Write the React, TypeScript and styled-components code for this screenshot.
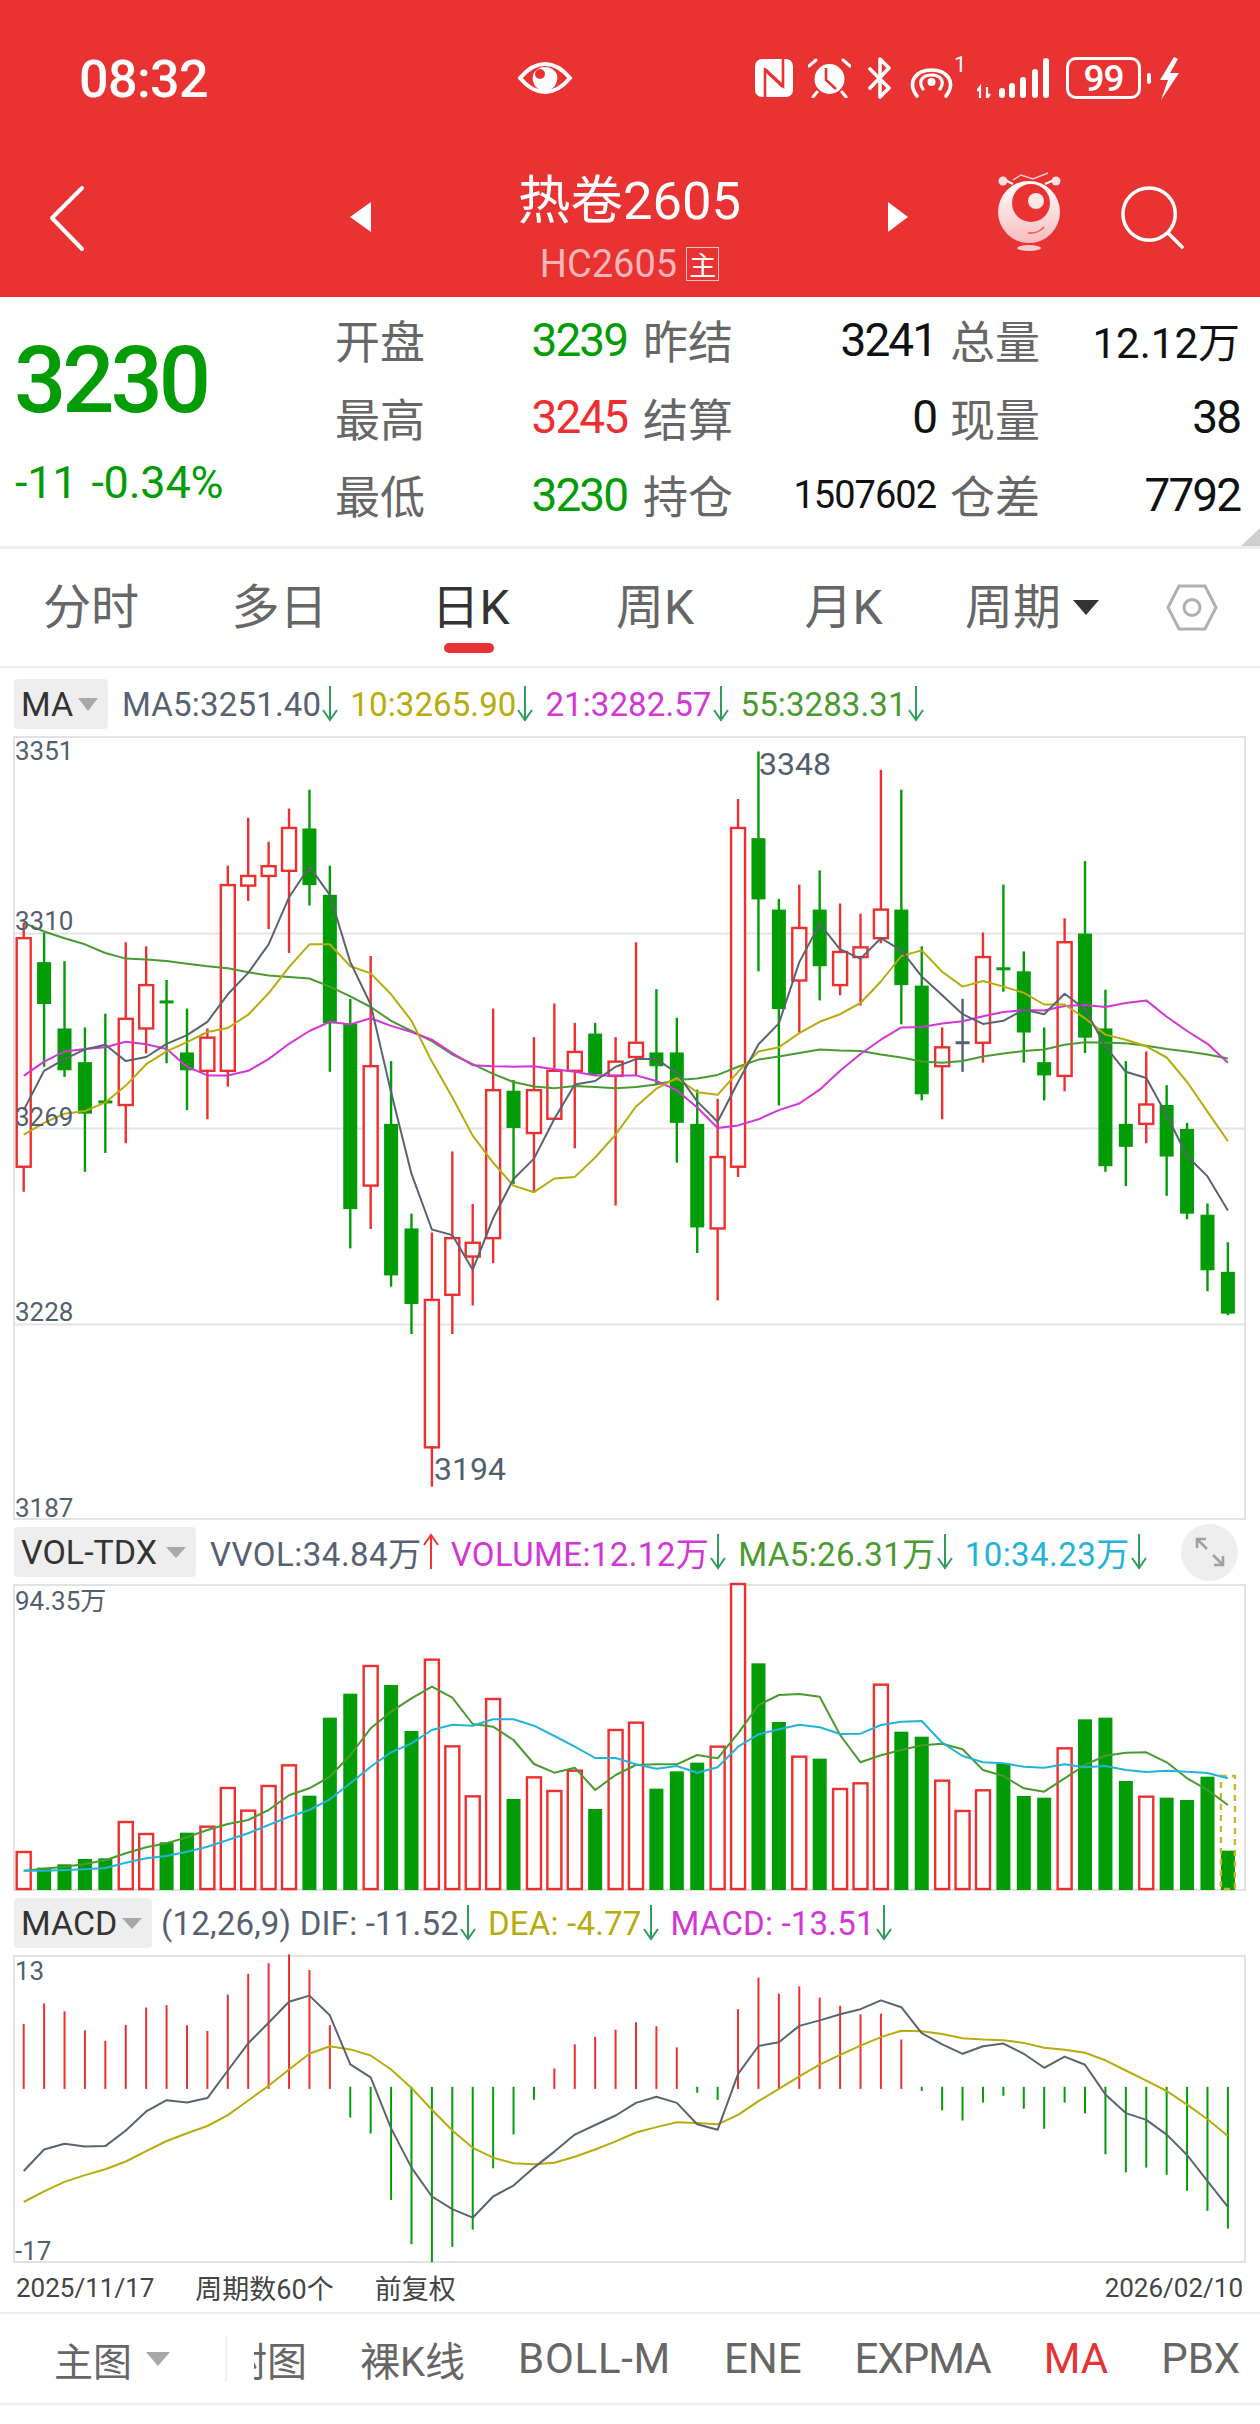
import styled, { createGlobalStyle } from 'styled-components';

const FONT = `Roboto, "Noto Sans CJK SC", sans-serif`;
const RED = '#ee2f2f';
const GREEN = '#029c06';
const LINE_GRAY = '#5a6470';
const LINE_YELLOW = '#b7ab0d';
const LINE_MAGENTA = '#d336d6';
const LINE_GREEN = '#4a9a2f';
const LINE_CYAN = '#22b4d8';

// candle x on the page
const cx = (i: number) => 23.7 + 20.41 * i;

// measured chart data, in crop units, converted below
type Candle = [number, number, number, number, 'r' | 'g' | 'n'];
const candles: Candle[] = [
  [378, 408, 856, 905, 'r'], [397, 455, 537, 660, 'g'], [453, 585, 667, 680, 'g'], [583, 651, 752, 866, 'g'],
  [556, 729, 729, 829, 'g'], [416, 566, 735, 810, 'r'], [424, 500, 585, 634, 'r'], [490, 533, 533, 653, 'g'],
  [546, 632, 667, 745, 'g'], [585, 603, 668, 763, 'r'], [266, 304, 668, 699, 'r'], [172, 286, 305, 335, 'r'],
  [219, 267, 286, 390, 'r'], [154, 192, 276, 437, 'r'], [117, 193, 304, 344, 'g'], [266, 323, 575, 670, 'g'],
  [527, 575, 939, 1016, 'g'], [443, 659, 893, 978, 'r'], [649, 772, 1069, 1091, 'g'], [948, 977, 1125, 1184, 'g'],
  [985, 1117, 1406, 1483, 'r'], [826, 996, 1107, 1184, 'r'], [929, 1005, 1032, 1128, 'r'], [546, 706, 996, 1045, 'r'],
  [686, 707, 780, 890, 'g'], [602, 706, 790, 905, 'r'], [536, 668, 762, 762, 'r'], [574, 631, 668, 820, 'r'],
  [574, 595, 675, 678, 'g'], [602, 650, 678, 932, 'r'], [416, 613, 641, 678, 'r'], [508, 632, 659, 695, 'g'],
  [564, 632, 770, 848, 'g'], [705, 772, 975, 1025, 'g'], [723, 837, 977, 1118, 'r'], [135, 192, 856, 876, 'r'],
  [42, 212, 332, 473, 'g'], [331, 352, 547, 736, 'g'], [303, 388, 491, 593, 'r'], [275, 352, 463, 530, 'g'],
  [340, 435, 500, 520, 'r'], [360, 426, 445, 540, 'r'], [78, 352, 408, 418, 'r'], [117, 352, 500, 577, 'g'],
  [424, 501, 714, 726, 'g'], [583, 622, 659, 763, 'r'], [527, 613, 613, 670, 'n'], [397, 445, 613, 652, 'r'],
  [303, 468, 468, 513, 'g'], [434, 473, 593, 652, 'g'], [583, 651, 677, 726, 'g'], [369, 416, 678, 708, 'r'],
  [257, 399, 603, 633, 'g'], [509, 585, 855, 866, 'g'], [649, 772, 817, 894, 'g'], [630, 734, 772, 810, 'r'],
  [696, 735, 836, 913, 'g'], [770, 782, 948, 959, 'g'], [928, 950, 1059, 1100, 'g'], [1004, 1062, 1144, 1147, 'g'],
];

const ma5 = [745, 668, 645, 626, 617, 649, 641, 615, 598, 572, 518, 476, 420, 328, 268, 323, 455, 538, 710, 870, 979, 990, 1058, 957, 880, 840, 762, 695, 688, 660, 645, 645, 672, 728, 768, 690, 616, 575, 455, 380, 430, 448, 408, 432, 483, 520, 557, 576, 570, 548, 557, 517, 547, 620, 670, 682, 755, 835, 875, 942];
const ma10 = [793, 770, 752, 747, 730, 697, 655, 630, 612, 592, 584, 558, 516, 465, 420, 420, 463, 477, 518, 570, 650, 720, 795, 848, 893, 906, 879, 876, 838, 793, 738, 703, 682, 710, 715, 670, 630, 622, 594, 572, 557, 535, 493, 443, 432, 474, 503, 492, 503, 515, 538, 538, 565, 597, 607, 620, 642, 690, 748, 806];
const ma21 = [678, 650, 630, 625, 622, 611, 616, 625, 660, 677, 677, 668, 645, 615, 590, 572, 577, 565, 580, 592, 607, 633, 657, 659, 660, 659, 665, 670, 677, 677, 677, 688, 706, 740, 780, 775, 763, 745, 732, 705, 668, 635, 607, 583, 582, 575, 571, 561, 553, 549, 550, 541, 539, 543, 535, 530, 562, 590, 615, 652];
const ma55 = [378, 395, 408, 420, 437, 448, 450, 453, 458, 463, 467, 475, 481, 484, 487, 503, 522, 543, 570, 590, 610, 636, 655, 674, 690, 699, 702, 698, 700, 702, 700, 695, 686, 683, 676, 660, 646, 640, 633, 626, 628, 629, 636, 642, 650, 652, 649, 640, 634, 629, 626, 617, 612, 613, 614, 619, 625, 630, 636, 644];

const volTops = [996, 1043, 1033, 1017, 1015, 906, 942, 967, 938, 920, 804, 872, 798, 736, 827, 593, 521, 438, 495, 633, 419, 679, 829, 537, 837, 772, 813, 752, 867, 630, 608, 806, 754, 728, 680, 192, 430, 606, 710, 716, 807, 790, 494, 635, 650, 782, 873, 811, 730, 828, 833, 685, 598, 593, 783, 830, 833, 840, 770, 992];
const volRed = new Set([0, 5, 6, 9, 10, 11, 12, 13, 17, 20, 21, 22, 23, 25, 26, 27, 29, 30, 34, 35, 38, 40, 41, 42, 45, 46, 47, 51, 55]);
const volMa5 = [1052, 1046, 1040, 1032, 1021, 1000, 982, 970, 952, 930, 912, 900, 870, 826, 805, 770, 705, 625, 575, 535, 500, 533, 612, 620, 660, 732, 758, 743, 810, 765, 735, 733, 733, 705, 715, 640, 555, 525, 522, 530, 645, 727, 706, 690, 676, 671, 688, 750, 768, 805, 815, 775, 735, 707, 698, 697, 727, 775, 810, 855];
const volMa10 = [1052, 1052, 1050, 1048, 1044, 1028, 1015, 1008, 995, 980, 960, 940, 915, 890, 870, 838, 790, 740, 697, 670, 630, 614, 617, 598, 598, 617, 648, 680, 714, 714, 733, 746, 738, 758, 742, 680, 643, 628, 614, 622, 642, 641, 615, 605, 603, 668, 708, 727, 730, 740, 743, 733, 742, 738, 750, 756, 752, 755, 759, 775];

const macdEnds = [393, 333, 356, 412, 443, 396, 345, 338, 397, 414, 307, 246, 215, 189, 235, 397, 668, 715, 910, 1040, 1093, 1048, 997, 817, 718, 616, 524, 453, 431, 410, 388, 400, 462, 595, 616, 350, 257, 304, 283, 316, 340, 365, 363, 439, 590, 647, 677, 624, 604, 642, 701, 624, 656, 776, 829, 815, 836, 883, 942, 994];
const dif = [825, 762, 745, 753, 752, 706, 650, 617, 624, 611, 530, 450, 390, 328, 310, 368, 512, 550, 700, 815, 900, 937, 962, 900, 868, 815, 768, 718, 690, 662, 625, 607, 625, 688, 704, 540, 458, 447, 399, 383, 365, 350, 324, 344, 420, 453, 481, 459, 451, 481, 522, 489, 513, 600, 655, 675, 718, 778, 855, 930];
const dea = [916, 885, 857, 837, 820, 797, 767, 737, 714, 693, 661, 618, 575, 527, 481, 459, 468, 486, 527, 581, 645, 706, 757, 786, 802, 805, 801, 783, 762, 738, 712, 696, 682, 684, 688, 660, 620, 584, 547, 513, 484, 457, 432, 413, 415, 423, 435, 439, 441, 449, 463, 469, 478, 500, 530, 560, 590, 630, 673, 722];

const mainY = (v: number) => 730 + v * 0.5102;
const volY = (v: number) => 1520 + v / 3;
const macdY = (v: number) => 1890 + v * 0.3406;

const GlobalStyle = createGlobalStyle`
  html, body {
    margin: 0;
    padding: 0;
    background: #fff;
  }
  * {
    box-sizing: border-box;
  }
`;

const Page = styled.div`
  width: 1260px;
  height: 2424px;
  overflow: hidden;
  background: #fff;
  font-family: ${FONT};
  color: #333;
`;

const Header = styled.header`
  height: 297px;
  background: #e93333;
  color: #fff;
`;

const StatusBar = styled.div`
  display: flex;
  align-items: center;
  height: 170px;
  padding: 0 0 14px 79px;
`;

const Clock = styled.span`
  width: 439px;
  padding-top: 3px;
  font-size: 52px;
  font-weight: 500;
  letter-spacing: -0.6px;
`;

const StatusIcons = styled.div`
  display: flex;
  align-items: center;
  margin-left: 183px;
`;

const Sup = styled.span`
  align-self: flex-start;
  width: 23px;
  margin-top: -3px;
  font-size: 22px;
  line-height: 22px;
`;

const Battery = styled.div`
  display: flex;
  align-items: center;
  justify-content: center;
  width: 75px;
  height: 42px;
  margin-left: 17px;
  border: 3px solid #fff;
  border-radius: 10px;
  font-size: 37px;
  font-weight: 500;
  letter-spacing: -1px;
`;

const BatteryNub = styled.div`
  width: 4px;
  height: 11px;
  margin: 0 8px 0 6px;
  background: #fff;
  border-radius: 2px;
`;

const NavBar = styled.nav`
  display: grid;
  grid-template-columns: 350px 21px 517px 20px 88px 63px 62px 64px 75px;
  height: 127px;
`;

const Arrow = styled.div<{ $dir: 'left' | 'right' }>`
  align-self: start;
  margin-top: 32px;
  width: 0;
  height: 0;
  border-top: 15px solid transparent;
  border-bottom: 15px solid transparent;
  ${(p) => (p.$dir === 'left' ? 'border-right: 21px solid #fff;' : 'border-left: 20px solid #fff;')}
`;

const TitleBlock = styled.div`
  display: flex;
  flex-direction: column;
  align-items: center;
`;

const Title = styled.div`
  padding-top: 3px;
  font-size: 52.5px;
  line-height: 56px;
`;

const SubTitle = styled.div`
  display: flex;
  align-items: center;
  gap: 9px;
  margin-top: 17px;
  height: 36px;
  font-size: 38px;
  color: #f7b7b7;
`;

const MainBadge = styled.span`
  display: flex;
  align-items: center;
  justify-content: center;
  width: 33px;
  height: 34px;
  border: 1px solid #f7c4c4;
  font-size: 27px;
  color: #fff;
`;

const QuotePanel = styled.section`
  position: relative;
  display: flex;
  height: 252px;
  border-bottom: 3px solid #eeeeee;
`;

const CornerMark = styled.div`
  position: absolute;
  right: 0;
  bottom: 0;
  width: 0;
  height: 0;
  border-left: 19px solid transparent;
  border-bottom: 18px solid #cfcfcf;
`;

const PriceBlock = styled.div`
  width: 335px;
  padding: 38px 0 0 14px;
  color: ${GREEN};
`;

const BigPrice = styled.div`
  font-size: 92px;
  font-weight: 500;
  line-height: 92px;
  letter-spacing: -4px;
`;

const PriceChange = styled.div`
  margin-top: 35px;
  padding-left: 1px;
  font-size: 45px;
  line-height: 42px;
  letter-spacing: -0.2px;
  word-spacing: 3px;
`;

const QuoteGrid = styled.div`
  display: grid;
  grid-template-columns: 90px 202px 106px 203px 104px 200px;
  grid-auto-rows: 77.5px;
  padding-top: 4px;
  align-items: center;
`;

const QuoteLabel = styled.span`
  font-size: 45px;
  color: #666;
  text-align: right;
  white-space: nowrap;
`;

const QuoteValue = styled.span<{ $color?: string; $size?: number }>`
  font-size: ${(p) => p.$size ?? 46}px;
  letter-spacing: ${(p) => (p.$size === 42 ? 0 : p.$size ? -1 : -2)}px;
  color: ${(p) => p.$color ?? '#111'};
  text-align: right;
  white-space: nowrap;
`;

const TabRow = styled.div`
  display: grid;
  grid-template-columns: 182px 195px 187px 182px 195px 204px 1fr;
  height: 119px;
  align-items: center;
  border-bottom: 2px solid #eeeeee;
`;

const Tab = styled.div<{ $active?: boolean }>`
  position: relative;
  text-align: center;
  font-size: 48px;
  line-height: 60px;
  color: ${(p) => (p.$active ? '#333' : '#666')};

  ${(p) =>
    p.$active &&
    `&::after {
      content: '';
      position: absolute;
      left: 67px;
      bottom: -15px;
      width: 50px;
      height: 10px;
      border-radius: 5px;
      background: #e93333;
    }`}
`;

const PeriodTab = styled.div`
  display: flex;
  align-items: center;
  gap: 12px;
  padding-left: 24px;
  font-size: 48px;
  line-height: 60px;
  color: #666;
`;

const Caret = styled.span<{ $w: number; $h: number; $color: string }>`
  display: inline-block;
  flex: none;
  width: 0;
  height: 0;
  border-left: ${(p) => p.$w / 2}px solid transparent;
  border-right: ${(p) => p.$w / 2}px solid transparent;
  border-top: ${(p) => p.$h}px solid ${(p) => p.$color};
`;

const LegendRow = styled.div<{ $h: number; $pad?: number }>`
  display: flex;
  align-items: center;
  height: ${(p) => p.$h}px;
  padding: ${(p) => p.$pad ?? 0}px 0 0 14px;
`;

const Tag = styled.div<{ $w: number; $gap: number }>`
  display: flex;
  flex: none;
  align-items: center;
  justify-content: space-between;
  width: ${(p) => p.$w}px;
  height: 50px;
  padding: 0 10px 0 7px;
  margin-right: ${(p) => p.$gap}px;
  background: #eeeeee;
  border-radius: 4px;
  font-size: 34px;
  color: #333;
  white-space: nowrap;
`;

const LegendItem = styled.span<{ $color: string; $track?: number; $end?: number }>`
  display: flex;
  align-items: center;
  margin-right: ${(p) => p.$end ?? 11}px;
  font-size: 33px;
  letter-spacing: ${(p) => p.$track ?? 0}px;
  color: ${(p) => p.$color};
  white-space: pre;
`;

const ExpandButton = styled.div`
  display: flex;
  align-items: center;
  justify-content: center;
  width: 57px;
  height: 57px;
  margin-left: auto;
  margin-right: 22px;
  border-radius: 50%;
  background: #eeeeee;
`;

const ChartFrame = styled.div<{ $h: number }>`
  width: 1233px;
  height: ${(p) => p.$h}px;
  margin-left: 13px;
  border: 2px solid #e2e2e2;

  svg {
    display: block;
    overflow: visible;
    font-family: Roboto, "Noto Sans CJK SC", sans-serif;
  }
`;

const FooterRow = styled.div`
  display: flex;
  align-items: center;
  gap: 41px;
  height: 49px;
  padding: 0 17px 0 16px;
  font-size: 26px;
  color: #444;
`;

const FooterNote = styled.span`
  font-size: 27px;
`;

const FooterEnd = styled.span`
  margin-left: auto;
`;

const BottomBar = styled.div`
  display: flex;
  align-items: center;
  height: 93px;
  border-top: 2px solid #eeeeee;
  border-bottom: 2px solid #eeeeee;
  font-size: 42px;
  color: #666;
`;

const MainChartPicker = styled.div`
  display: flex;
  align-items: center;
  gap: 14px;
  width: 225px;
  padding-left: 54px;
  font-size: 39px;
`;

const BarDivider = styled.div`
  width: 2px;
  height: 46px;
  background: #f0f0f0;
`;

const ScrollTabs = styled.div`
  display: flex;
  align-items: center;
  gap: 53px;
  flex: 1;
  margin-left: 27px;
  overflow: hidden;
  white-space: nowrap;
`;

const ScrollTab = styled.span<{ $clip?: boolean; $cjk?: boolean; $active?: boolean; $track?: number }>`
  flex: none;
  letter-spacing: ${(p) => p.$track ?? 0}px;
  ${(p) => p.$cjk && 'font-size: 40px;'}
  ${(p) => p.$clip && 'margin-left: -27px;'}
  color: ${(p) => (p.$active ? '#e53232' : '#666')};
`;

const TrendArrow = ({ up }: { up?: boolean }) => (
  <svg width="18" height="38" viewBox="2 0 18 38" style={{ display: 'block', flex: 'none' }} fill="none" stroke={up ? '#ee3333' : '#2f9e5c'} strokeWidth="2">
    {up ? <path d="M11 36V2M4 12L11 2L18 12" /> : <path d="M11 1V35M4 25L11 35L18 25" />}
  </svg>
);

const line = (vals: number[], map: (v: number) => number) =>
  vals.map((v, i) => `${i === 0 ? 'M' : 'L'}${cx(i).toFixed(1)} ${map(v).toFixed(1)}`).join('');

const Curve = ({ vals, map, color }: { vals: number[]; map: (v: number) => number; color: string }) => (
  <path d={line(vals, map)} fill="none" stroke={color} strokeWidth="2" strokeLinejoin="round" />
);

const ChartText = styled.text<{ $size?: number }>`
  font-size: ${(p) => p.$size ?? 26}px;
  fill: #52606d;
`;

const CandleChart = () => (
  <svg width="1229" height="780" viewBox="15 738 1229 780">
    {[933.5, 1128.5, 1324.5].map((y) => (
      <line key={y} x1="15" x2="1244" y1={y} y2={y} stroke="#e4e4e4" strokeWidth="2" />
    ))}
    {candles.map(([h, top, bot, low, kind], i) => {
      const x = cx(i);
      const color = kind === 'r' ? RED : kind === 'g' ? GREEN : '#52606d';
      const t = mainY(top);
      const b = mainY(bot);
      return (
        <g key={i}>
          <line x1={x} x2={x} y1={mainY(h)} y2={mainY(low)} stroke={color} strokeWidth="2.4" />
          {top === bot ? (
            <rect x={x - 7} y={t - 1.5} width="14" height="3" fill={color} />
          ) : kind === 'g' ? (
            <rect x={x - 7} y={t} width="14" height={b - t} fill={color} />
          ) : (
            <rect x={x - 7} y={t} width="14" height={b - t} fill="#fff" stroke={color} strokeWidth="2.4" />
          )}
        </g>
      );
    })}
    <Curve vals={ma55} map={mainY} color={LINE_GREEN} />
    <Curve vals={ma21} map={mainY} color={LINE_MAGENTA} />
    <Curve vals={ma10} map={mainY} color={LINE_YELLOW} />
    <Curve vals={ma5} map={mainY} color={LINE_GRAY} />
    <ChartText x="15" y="760">3351</ChartText>
    <ChartText x="15" y="930">3310</ChartText>
    <ChartText x="15" y="1126">3269</ChartText>
    <ChartText x="15" y="1321">3228</ChartText>
    <ChartText x="15" y="1517">3187</ChartText>
    <ChartText x="759" y="775" $size={32}>3348</ChartText>
    <ChartText x="434" y="1480" $size={32}>3194</ChartText>
  </svg>
);

const VolumeChart = () => (
  <svg width="1229" height="303" viewBox="15 1586 1229 303">
    {volTops.map((v, i) => {
      const x = cx(i);
      const t = volY(v);
      return volRed.has(i) ? (
        <rect key={i} x={x - 7} y={t} width="14" height={1889 - t} fill="#fff" stroke={RED} strokeWidth="2.4" />
      ) : (
        <rect key={i} x={x - 7} y={t} width="14" height={1890 - t} fill={GREEN} />
      );
    })}
    <rect x={cx(59) - 7} y={volY(768)} width="14" height={1889 - volY(768)} fill="none" stroke="#c4b92a" strokeWidth="2.4" strokeDasharray="6 5" />
    <Curve vals={volMa5} map={volY} color={LINE_GREEN} />
    <Curve vals={volMa10} map={volY} color={LINE_CYAN} />
    <ChartText x="15" y="1610">94.35万</ChartText>
  </svg>
);

const MacdChart = () => (
  <svg width="1229" height="304" viewBox="15 1957 1229 304">
    {macdEnds.map((v, i) => {
      const x = cx(i);
      const up = v < 583;
      return (
        <line key={i} x1={x} x2={x} y1={macdY(up ? 584 : 578)} y2={macdY(v)} stroke={up ? RED : GREEN} strokeWidth="2" />
      );
    })}
    <Curve vals={dea} map={macdY} color={LINE_YELLOW} />
    <Curve vals={dif} map={macdY} color={LINE_GRAY} />
    <ChartText x="15" y="1980">13</ChartText>
    <ChartText x="15" y="2260">-17</ChartText>
  </svg>
);

const App = () => (
  <Page>
    <GlobalStyle />
    <Header>
      <StatusBar>
        <Clock>08:32</Clock>
        <svg width="54" height="32" viewBox="0 0 54 32">
          <path d="M2 16C12 4 20 2 27 2C34 2 42 4 52 16C42 28 34 30 27 30C20 30 12 28 2 16Z" fill="none" stroke="#fff" strokeWidth="4" />
          <path d="M15 13A13 13 0 0 1 39 13C41 22 34 29 27 29C20 29 13 22 15 13Z" fill="#fff" />
          <circle cx="22" cy="12" r="5" fill="#e93333" />
        </svg>
        <StatusIcons>
          <svg width="38" height="38" viewBox="0 0 38 38">
            <rect width="38" height="38" rx="7" fill="#fff" />
            <path d="M10 38V11L28 28M28 0V27L10 10" fill="none" stroke="#e93333" strokeWidth="2.6" />
          </svg>
          <svg width="43" height="40" viewBox="0 0 43 40" style={{ marginLeft: 15 }}>
            <circle cx="21.5" cy="21" r="15" fill="#fff" />
            <path d="M18 10V22L28 31" fill="none" stroke="#e93333" strokeWidth="2.6" />
            <path d="M1 8L8 2M42 8L35 2M9 34L5 39M34 34L38 39" stroke="#fff" strokeWidth="3" strokeLinecap="round" />
          </svg>
          <svg width="25" height="42" viewBox="0 0 25 42" style={{ marginLeft: 16 }}>
            <path d="M3 12L22 31L13 40V2L22 11L3 31" fill="none" stroke="#fff" strokeWidth="3.6" strokeLinejoin="round" strokeLinecap="round" />
          </svg>
          <svg width="45" height="30" viewBox="0 0 45 30" style={{ marginLeft: 17, marginTop: 10 }}>
            <path d="M8 28C-3 13 8 2 22.5 2C37 2 48 13 37 28" fill="none" stroke="#fff" strokeWidth="3.6" strokeLinecap="round" />
            <path d="M14 21C8 12 15 7 22.5 7C30 7 37 12 31 21" fill="none" stroke="#fff" strokeWidth="3.2" strokeLinecap="round" />
            <circle cx="22.5" cy="14" r="4" fill="#fff" />
          </svg>
          <Sup>1</Sup>
          <svg width="72" height="40" viewBox="0 0 72 40">
            <path d="M3 40V29L0 33M10 29V40L13 36" fill="none" stroke="#fff" strokeWidth="2.2" />
            {[[22, 30], [32, 25], [43, 19], [55, 11], [66, 0]].map(([x, y]) => (
              <rect key={x} x={x} y={y} width="6" height={40 - y} rx="3" fill="#fff" />
            ))}
          </svg>
          <Battery>99</Battery>
          <BatteryNub />
          <svg width="20" height="43" viewBox="0 0 20 43">
            <path d="M15 0L1 23L9 23L2 43L20 16L11 16L19 2Z" fill="#fff" />
          </svg>
        </StatusIcons>
      </StatusBar>
      <NavBar>
        <svg width="350" height="100" viewBox="0 0 350 100">
          <path d="M82 18L52 48L82 79" fill="none" stroke="#fff" strokeWidth="4" strokeLinecap="round" strokeLinejoin="round" />
        </svg>
        <Arrow $dir="left" />
        <TitleBlock>
          <Title>热卷2605</Title>
          <SubTitle>
            HC2605
            <MainBadge>主</MainBadge>
          </SubTitle>
        </TitleBlock>
        <Arrow $dir="right" />
        <span />
        <svg width="67" height="82" viewBox="995 176 67 82">
          <defs>
            <linearGradient id="mascot" x1="0" y1="0" x2="0" y2="1">
              <stop offset="0" stopColor="#ffffff" />
              <stop offset="1" stopColor="#f8bcbc" />
            </linearGradient>
          </defs>
          <path d="M1012 190L1004 186M1044 190L1053 186" stroke="#fff" strokeWidth="2" />
          <circle cx="1002" cy="187" r="4.5" fill="#fde0e0" />
          <circle cx="1055" cy="187" r="4.5" fill="#fde0e0" />
          <path d="M1012 186L1020 181L1032 185L1047 179" fill="none" stroke="#f9caca" strokeWidth="1.4" />
          <circle cx="1028" cy="218" r="31" fill="url(#mascot)" />
          <circle cx="1030" cy="209" r="19" fill="#e93333" />
          <circle cx="1035" cy="207" r="8" fill="#fde6e6" />
          <path d="M1027 239Q1037 240 1043 233" fill="none" stroke="#e96060" strokeWidth="1.6" />
          <ellipse cx="1028" cy="254" rx="12" ry="3" fill="#f9caca" />
        </svg>
        <span />
        <svg width="64" height="66" viewBox="1120 184 66 68" style={{ marginTop: 14 }}>
          <circle cx="1149" cy="215" r="27" fill="none" stroke="#fff" strokeWidth="3.6" />
          <path d="M1169 235L1183 249" stroke="#fff" strokeWidth="3.6" strokeLinecap="round" />
        </svg>
      </NavBar>
    </Header>

    <QuotePanel>
      <PriceBlock>
        <BigPrice>3230</BigPrice>
        <PriceChange>-11 -0.34%</PriceChange>
      </PriceBlock>
      <QuoteGrid>
        <QuoteLabel>开盘</QuoteLabel>
        <QuoteValue $color={GREEN}>3239</QuoteValue>
        <QuoteLabel>昨结</QuoteLabel>
        <QuoteValue>3241</QuoteValue>
        <QuoteLabel>总量</QuoteLabel>
        <QuoteValue $size={42}>12.12万</QuoteValue>
        <QuoteLabel>最高</QuoteLabel>
        <QuoteValue $color={RED}>3245</QuoteValue>
        <QuoteLabel>结算</QuoteLabel>
        <QuoteValue>0</QuoteValue>
        <QuoteLabel>现量</QuoteLabel>
        <QuoteValue>38</QuoteValue>
        <QuoteLabel>最低</QuoteLabel>
        <QuoteValue $color={GREEN}>3230</QuoteValue>
        <QuoteLabel>持仓</QuoteLabel>
        <QuoteValue $size={38}>1507602</QuoteValue>
        <QuoteLabel>仓差</QuoteLabel>
        <QuoteValue>7792</QuoteValue>
      </QuoteGrid>
      <CornerMark />
    </QuotePanel>

    <TabRow>
      <Tab>分时</Tab>
      <Tab>多日</Tab>
      <Tab $active>日K</Tab>
      <Tab>周K</Tab>
      <Tab>月K</Tab>
      <PeriodTab>
        周期
        <Caret $w={27} $h={15} $color="#333" />
      </PeriodTab>
      <svg width="52" height="47" viewBox="0 0 52 47" style={{ marginLeft: 21 }}>
        <path d="M13 2H39L50 23.5L39 45H13L2 23.5Z" fill="none" stroke="#b0b0b0" strokeWidth="3" />
        <circle cx="26" cy="23.5" r="8" fill="none" stroke="#b0b0b0" strokeWidth="3" />
      </svg>
    </TabRow>

    <LegendRow $h={68} $pad={4}>
      <Tag $w={94} $gap={14}>
        MA
        <Caret $w={20} $h={13} $color="#a8a8a8" />
      </Tag>
      <LegendItem $color="#566270" $track={0.2}>MA5:3251.40<TrendArrow /></LegendItem>
      <LegendItem $color={LINE_YELLOW} $track={0.1}>10:3265.90<TrendArrow /></LegendItem>
      <LegendItem $color={LINE_MAGENTA} $track={0.1}>21:3282.57<TrendArrow /></LegendItem>
      <LegendItem $color={LINE_GREEN} $track={0.1}>55:3283.31<TrendArrow /></LegendItem>
    </LegendRow>
    <ChartFrame $h={784}>
      <CandleChart />
    </ChartFrame>

    <LegendRow $h={64}>
      <Tag $w={182} $gap={14}>
        VOL-TDX
        <Caret $w={20} $h={11} $color="#a8a8a8" />
      </Tag>
      <LegendItem $color="#566270" $track={0.5}>VVOL:34.84万<TrendArrow up /></LegendItem>
      <LegendItem $color={LINE_MAGENTA} $track={0.4}>VOLUME:12.12万<TrendArrow /></LegendItem>
      <LegendItem $color={LINE_GREEN} $track={0.45}>MA5:26.31万<TrendArrow /></LegendItem>
      <LegendItem $color={LINE_CYAN} $track={0.45}>10:34.23万<TrendArrow /></LegendItem>
      <ExpandButton>
        <svg width="30" height="30" viewBox="0 0 30 30" fill="none" stroke="#a0a0a0" strokeWidth="2.6">
          <path d="M2 2L12 12M2 11V2H11M28 28L18 18M28 19V28H19" />
        </svg>
      </ExpandButton>
    </LegendRow>
    <ChartFrame $h={307}>
      <VolumeChart />
    </ChartFrame>

    <LegendRow $h={64}>
      <Tag $w={138} $gap={9}>
        MACD
        <Caret $w={20} $h={11} $color="#a8a8a8" />
      </Tag>
      <LegendItem $color="#566270" $track={0.2}>(12,26,9) DIF: -11.52<TrendArrow /></LegendItem>
      <LegendItem $color={LINE_YELLOW} $track={0.2}>DEA: -4.77<TrendArrow /></LegendItem>
      <LegendItem $color={LINE_MAGENTA} $track={0.2}>MACD: -13.51<TrendArrow /></LegendItem>
    </LegendRow>
    <ChartFrame $h={308}>
      <MacdChart />
    </ChartFrame>

    <FooterRow>
      <span>2025/11/17</span>
      <FooterNote>周期数60个</FooterNote>
      <FooterNote>前复权</FooterNote>
      <FooterEnd>2026/02/10</FooterEnd>
    </FooterRow>

    <BottomBar>
      <MainChartPicker>
        主图
        <Caret $w={24} $h={14} $color="#a8a8a8" />
      </MainChartPicker>
      <BarDivider />
      <ScrollTabs>
        <ScrollTab $clip $cjk>附图</ScrollTab>
        <ScrollTab $cjk>裸K线</ScrollTab>
        <ScrollTab $track={0.7}>BOLL-M</ScrollTab>
        <ScrollTab>ENE</ScrollTab>
        <ScrollTab $track={-1}>EXPMA</ScrollTab>
        <ScrollTab $active>MA</ScrollTab>
        <ScrollTab>PBX</ScrollTab>
      </ScrollTabs>
    </BottomBar>
  </Page>
);

export default App;
